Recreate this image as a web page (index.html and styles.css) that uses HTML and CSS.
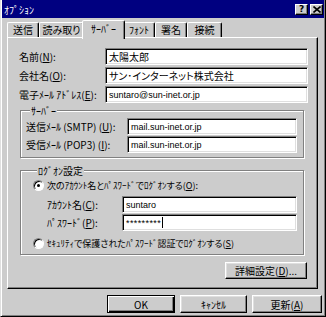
FILE: index.html
```html
<!DOCTYPE html>
<html lang="ja">
<head>
<meta charset="utf-8">
<title>ｵﾌﾟｼｮﾝ</title>
<link rel="stylesheet" href="styles.css">
</head>
<body>
<div class="window">
  <div class="titlebar">
    <span class="title">ｵﾌﾟｼｮﾝ</span>
    <div class="tb-btns">
      <span class="tb-btn help">?</span>
      <span class="tb-btn close"><svg width="8" height="7" viewBox="0 0 8 7"><path d="M0.5 0.5 L7.5 6.5 M7.5 0.5 L0.5 6.5" stroke="#000" stroke-width="1.6" fill="none"/></svg></span>
    </div>
  </div>
  <div class="tabs">
    <div class="tab t1">送信</div>
    <div class="tab t2">読み取り</div>
    <div class="tab t3 active">ｻｰﾊﾞｰ</div>
    <div class="tab t4">ﾌｫﾝﾄ</div>
    <div class="tab t5">署名</div>
    <div class="tab t6">接続</div>
  </div>
  <div class="panel">
    <div class="form-grid">
      <span class="label">名前(<u>N</u>):</span><div class="input">太陽太郎</div>
      <span class="label">会社名(<u>O</u>):</span><div class="input">サン･インターネット株式会社</div>
      <span class="label">電子ﾒｰﾙ ｱﾄﾞﾚｽ(<u>E</u>):</span><div class="input ascii">suntaro@sun-inet.or.jp</div>
    </div>
    <div class="group server">
      <div class="group-title">ｻｰﾊﾞｰ</div>
      <div class="server-grid">
        <span class="label">送信ﾒｰﾙ (SMTP) (<u>U</u>):</span><div class="input ascii">mail.sun-inet.or.jp</div>
        <span class="label">受信ﾒｰﾙ (POP3) (<u>I</u>):</span><div class="input ascii">mail.sun-inet.or.jp</div>
      </div>
    </div>
    <div class="group logon">
      <div class="group-title">ﾛｸﾞｵﾝ設定</div>
      <div class="radio-row">
        <span class="radio checked"></span>
        <span class="label option">次のｱｶｳﾝﾄ名とﾊﾟｽﾜｰﾄﾞでﾛｸﾞｵﾝする(<u>O</u>):</span>
      </div>
      <div class="account-grid">
        <span class="label">ｱｶｳﾝﾄ名(<u>C</u>):</span><div class="input ascii">suntaro</div>
        <span class="label">ﾊﾟｽﾜｰﾄﾞ(<u>P</u>):</span><div class="input ascii"><span class="stars">*********</span><span class="caret"></span></div>
      </div>
      <div class="radio-row second">
        <span class="radio"></span>
        <span class="label option">ｾｷｭﾘﾃｨで保護されたﾊﾟｽﾜｰﾄﾞ認証でﾛｸﾞｵﾝする(<u>S</u>)</span>
      </div>
    </div>
    <div class="adv-row">
      <div class="btn adv">詳細設定(<u>D</u>)...</div>
    </div>
  </div>
  <div class="footer">
    <div class="btn default ok">OK</div>
    <div class="btn cancel">ｷｬﾝｾﾙ</div>
    <div class="btn apply">更新(<u>A</u>)</div>
  </div>
</div>
</body>
</html>
```

FILE: styles.css
```css
* { box-sizing: border-box; }
html, body { margin: 0; padding: 0; background: #cccccc; }
body {
  font-family: "Noto Sans CJK JP", "Noto Sans", sans-serif;
  font-size: 10px;
  line-height: 13px;
  color: #000;
  font-feature-settings: "palt" 1;
}
u { text-decoration: underline; text-underline-offset: 1px; }

.window {
  width: 326px;
  height: 317px;
  background: #cccccc;
  border: 1px solid;
  border-top: 0;
  border-color: #000 #000 #000 #dfdfdf;
  box-shadow: inset 1px 0 #fff, inset -1px -1px #808080;
  padding: 0 1px 1px 1px;
  display: flex;
  flex-direction: column;
}

.titlebar {
  flex: none;
  height: 18px;
  background: #000080;
  color: #fff;
  display: flex;
  align-items: center;
  justify-content: space-between;
  padding: 0 1px 0 2px;
}
.tb-btns { display: flex; gap: 2px; }
.tb-btn {
  width: 13px;
  height: 11px;
  background: #cccccc;
  border: 1px solid;
  border-color: #fff #000 #000 #fff;
  box-shadow: inset -1px -1px #808080;
  display: flex;
  align-items: center;
  justify-content: center;
  color: #000;
  font: bold 9px/1 "DejaVu Sans", sans-serif;
}

.tabs {
  flex: none;
  display: flex;
  align-items: flex-end;
  height: 17px;
  margin: 2px 0 0 5px;
}
.tab {
  height: 15px;
  border: 1px solid;
  border-bottom: 0;
  border-color: #fff #000 transparent #fff;
  border-radius: 2px 2px 0 0;
  box-shadow: inset -1px 0 #808080;
  text-align: center;
  line-height: 13px;
  white-space: nowrap;
}
.t1 { width: 32px; }
.t2 { width: 45px; }
.t3 { width: 39px; }
.t4 { width: 32px; }
.t5 { width: 32px; }
.t6 { width: 35px; }
.tab.active {
  height: 19px;
  width: 43px;
  margin: 0 -2px -2px;
  position: relative;
  z-index: 1;
  background: #cccccc;
  line-height: 15px;
}

.panel {
  flex: none;
  height: 252px;
  margin: 0 6px 0 5px;
  border: 1px solid;
  border-color: #fff #000 #000 #fff;
  box-shadow: inset -1px -1px #808080;
  padding: 10px 9px 0 11px;
}

.label { white-space: nowrap; }
.label.option { font-size: 9px; }

.form-grid {
  display: grid;
  grid-template-columns: 86px 1fr;
  row-gap: 2px;
  align-items: center;
}

.input {
  height: 17px;
  background: #fff;
  border: 1px solid;
  border-color: #808080 #fff #fff #808080;
  box-shadow: inset 1px 1px #000, inset -1px -1px #dfdfdf;
  padding: 1px 3px 0;
  line-height: 14px;
  white-space: nowrap;
  overflow: hidden;
}
.input.ascii {
  font-family: "Liberation Sans", Arial, sans-serif;
  font-size: 9px;
}
.stars { letter-spacing: 0.4px; }
.caret {
  display: inline-block;
  width: 1px;
  height: 11px;
  background: #000;
  vertical-align: -2px;
  margin-left: 1px;
}

.group {
  border: 1px solid #808080;
  box-shadow: inset 1px 1px #fff, 1px 1px #fff;
}
.group-title {
  display: table;
  margin: -7px 0 0 4px;
  padding: 0 1px;
  background: #cccccc;
  line-height: 13px;
}

.server {
  margin: 7px 4px 0 1px;
  padding: 0 6px 4px 5px;
}
.server-grid {
  display: grid;
  grid-template-columns: 101px 1fr;
  row-gap: 1px;
  margin-top: 1px;
  align-items: center;
}

.logon {
  margin: 12px 4px 0 1px;
  padding: 0 6px 4px 12px;
}
.radio-row {
  display: flex;
  align-items: center;
  gap: 3px;
  height: 14px;
  margin-top: 1px;
}
.radio-row.second { margin-top: 5px; }
.radio {
  flex: none;
  width: 11px;
  height: 11px;
  border-radius: 50%;
  background: #fff;
  border: 1px solid;
  border-color: #808080 #fff #fff #808080;
  box-shadow: inset 1px 1px #000;
  display: flex;
  align-items: center;
  justify-content: center;
}
.radio.checked::after {
  content: "";
  width: 3px;
  height: 3px;
  border-radius: 50%;
  background: #000;
}
.account-grid {
  display: grid;
  grid-template-columns: 75px 1fr;
  row-gap: 1px;
  margin: 4px 0 0 14px;
  align-items: center;
}

.adv-row {
  display: flex;
  justify-content: flex-end;
  margin: 7px 1px 0 0;
}

.btn {
  height: 17px;
  background: #cccccc;
  border: 1px solid;
  border-color: #fff #000 #000 #fff;
  box-shadow: inset -1px -1px #808080, inset 1px 1px #dfdfdf;
  display: flex;
  align-items: center;
  justify-content: center;
  white-space: nowrap;
}
.adv { width: 82px; }

.footer {
  flex: none;
  display: flex;
  justify-content: flex-end;
  gap: 5px;
  margin: 6px 2px 0 0;
}
.footer .btn { height: 18px; }
.ok { width: 68px; }
.cancel { width: 67px; }
.apply { width: 70px; }
.btn.default {
  border-color: #000;
  box-shadow: inset 1px 1px #fff, inset -1px -1px #000, inset -2px -2px #808080;
}
```
